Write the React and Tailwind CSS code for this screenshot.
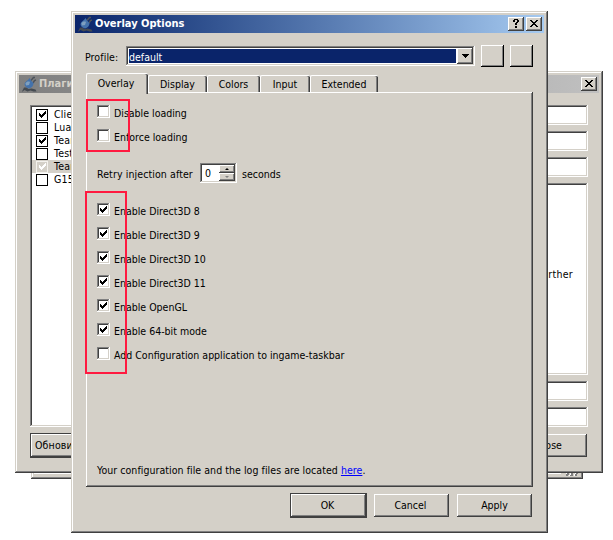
import clsx from 'clsx';

const RAISED =
  'bg-[#d4d0c8] shadow-[inset_-1px_-1px_#404040,inset_1px_1px_#fff,inset_-2px_-2px_#808080]';
const FRAME =
  'bg-[#d4d0c8] shadow-[inset_-1px_-1px_#404040,inset_1px_1px_#d4d0c8,inset_-2px_-2px_#808080,inset_2px_2px_#fff]';
const SUNKEN =
  'bg-white shadow-[inset_-1px_-1px_#fff,inset_1px_1px_#808080,inset_-2px_-2px_#d4d0c8,inset_2px_2px_#404040]';

const plugins = [
  { name: 'Client', checked: true },
  { name: 'Lua', checked: false },
  { name: 'Team', checked: true },
  { name: 'Test', checked: false },
  { name: 'Team', checked: true, disabled: true },
  { name: 'G15', checked: false },
];

const options = [
  { label: 'Enable Direct3D 8', checked: true },
  { label: 'Enable Direct3D 9', checked: true },
  { label: 'Enable Direct3D 10', checked: true },
  { label: 'Enable Direct3D 11', checked: true },
  { label: 'Enable OpenGL', checked: true },
  { label: 'Enable 64-bit mode', checked: true },
  { label: 'Add Configuration application to ingame-taskbar', checked: false },
];

function Tick() {
  return (
    <svg viewBox="0 0 7 7" className="h-[7px] w-[7px]" shapeRendering="crispEdges" fill="currentColor">
      <path d="M0 2h1v1h1v1h1v-1h1v-1h1v-1h1v-1h1v3h-1v1h-1v1h-1v1h-1v1h-1v-1h-1v-1h-1z" />
    </svg>
  );
}

function CloseGlyph() {
  return (
    <svg viewBox="0 0 8 7" className="h-[7px] w-2" shapeRendering="crispEdges">
      <path d="M0 0h2v1h1v1h2v-1h1v-1h2v1h-1v1h-1v1h-1v1h1v1h1v1h1v1h-2v-1h-1v-1h-2v1h-1v1h-2v-1h1v-1h1v-1h1v-1h-1v-1h-1v-1h-1z" />
    </svg>
  );
}

function HelpGlyph() {
  return (
    <svg viewBox="0 0 6 9" className="h-[9px] w-1.5" shapeRendering="crispEdges">
      <path d="M1 0h4v1h1v2h-1v1h-1v2h-2v-2h1v-1h1v-2h-2v2h-2v-2h1zM2 7h2v2h-2z" />
    </svg>
  );
}

function AppIcon() {
  return (
    <svg viewBox="0 0 16 16" className="h-4 w-4">
      <path d="M1 15.500l2-4h2.500l2 1.500 3-.5 4 1 1 2h-3l-3-1-3 1-3-1.500-2 1.500z" fill="#454b52" />
      <path d="M10 4.500l2.500-3h1.500M12 7l1.500-2.500 1.500-.5" stroke="#4d535a" strokeWidth="1.5" fill="none" />
      <path d="M8.500 2l1.500 2.500 2.500 2.500c0 3-2 5-4.500 5.500C5 12 3.500 10 3.500 8 4 5.500 7 4.500 8.500 2z" fill="#4472ab" />
      <path d="M4.500 7.500c1-2 3-2.500 4.500-1.500l-1 3-3 .5z" fill="#7fa0c0" />
    </svg>
  );
}

function CaptionButton({ children }) {
  return <button className={clsx('flex h-3.5 w-4 items-center justify-center pr-px pb-px', RAISED)}>{children}</button>;
}

function Checkbox({ checked }) {
  return (
    <span className={clsx('flex h-[13px] w-[13px] shrink-0 items-center justify-center', SUNKEN)}>
      {checked && <Tick />}
    </span>
  );
}

function CheckRow({ label, checked }) {
  return (
    <label className="flex h-6 items-start">
      <Checkbox checked={checked} />
      <span className="ml-1 pt-0.5 leading-[13px]">{label}</span>
    </label>
  );
}

function Tab({ label, width }) {
  return (
    <div
      className={clsx(
        'flex h-[17px] items-center justify-center rounded-t-[2px] border-t border-l border-white pt-0.5 pr-px shadow-[inset_-1px_0_#404040,inset_-2px_0_#808080]',
        width
      )}
    >
      {label}
    </div>
  );
}

function PluginsWindow() {
  return (
    <div className={clsx('absolute top-[71px] left-[15px] h-[402px] w-[588px] p-1', FRAME)}>
      <div className="flex h-[18px] items-center bg-linear-to-r from-[#808080] to-[#c0c0c0] pr-0.5 pl-0.5">
        <AppIcon />
        <span className="ml-0.5 text-[11px] font-bold text-[#d4d0c8]">Плагины</span>
        <span className="ml-auto">
          <CaptionButton>
            <CloseGlyph />
          </CaptionButton>
        </span>
      </div>
      <div className="mt-3 flex justify-between pr-[11px] pl-[11px]">
        <div>
          <div className={clsx('h-[322px] w-[200px] p-0.5 pt-[3px]', SUNKEN)}>
            {plugins.map((p, i) => (
              <div key={i} className={clsx('flex h-[13px] items-center pl-1', p.disabled && 'bg-[#d4d0c8]')}>
                <span
                  className={clsx(
                    'flex h-3 w-3 items-center justify-center border',
                    p.disabled ? 'border-[#f4f2ee] text-white' : 'border-black bg-white'
                  )}
                >
                  {p.checked && <Tick />}
                </span>
                <span className="ml-1.5 leading-[13px] tracking-[0.2px] whitespace-nowrap">{p.name}</span>
              </div>
            ))}
          </div>
          <button className={clsx('mt-1.5 h-[25px] w-[100px] border border-[#404040] pl-1 text-left tracking-[0.15px]', RAISED)}>
            Обновить
          </button>
        </div>
        <div className="flex w-[300px] flex-col gap-1.5">
          <div className={clsx('h-5', SUNKEN)} />
          <div className={clsx('h-5', SUNKEN)} />
          <div className={clsx('h-5', SUNKEN)} />
          <div className={clsx('flex h-48 items-center justify-end pr-[15px] pb-2 tracking-[0.3px]', SUNKEN)}>further</div>
          <div className={clsx('h-5', SUNKEN)} />
          <div className={clsx('h-5', SUNKEN)} />
          <button className={clsx('mt-px mr-px h-[23px] w-[76px] self-end', RAISED)}>Close</button>
        </div>
      </div>
    </div>
  );
}

function OverlayPane() {
  return (
    <div className="h-[395px] bg-[#d4d0c8] pt-[13px] pl-[11px] shadow-[inset_-1px_-1px_#404040,inset_1px_1px_#fff,inset_-2px_-2px_#808080]">
      <CheckRow label="Disable loading" />
      <CheckRow label="Enforce loading" />
      <div className="mt-2.5 flex h-5 items-center">
        <span className="w-[103px] pt-[3px] tracking-[0.1px]">Retry injection after</span>
        <div className={clsx('flex h-5 w-[37px] p-0.5', SUNKEN)}>
          <span className="grow pl-[3px] leading-[17px]">0</span>
          <div className="flex w-4 flex-col">
            <span className={clsx('flex h-2 items-center justify-center', RAISED)}>
              <i className="border-x-2 border-b-2 border-x-transparent border-b-black" />
            </span>
            <span className={clsx('flex h-2 items-center justify-center', RAISED)}>
              <i className="border-x-2 border-t-2 border-x-transparent border-t-[#808080]" />
            </span>
          </div>
        </div>
        <span className="ml-[5px] pt-[3px]">seconds</span>
      </div>
      <div className="mt-5">
        {options.map((o) => (
          <CheckRow key={o.label} {...o} />
        ))}
      </div>
      <p className="mt-[92px] leading-[15px] tracking-[0.05px]">
        Your configuration file and the log files are located{' '}
        <a href="#" className="text-[#0000ff] underline">
          here
        </a>
        .
      </p>
    </div>
  );
}

function OptionsWindow() {
  return (
    <div className={clsx('absolute top-[11px] left-[71px] h-[522px] w-[477px] p-1', FRAME)}>
      <div className="flex h-[18px] items-center bg-linear-to-r from-[#0a246a] to-[#a6caf0] pr-0.5 pl-0.5">
        <AppIcon />
        <span className="ml-0.5 text-[11px] font-bold text-white">Overlay Options</span>
        <div className="ml-auto flex gap-0.5">
          <CaptionButton>
            <HelpGlyph />
          </CaptionButton>
          <CaptionButton>
            <CloseGlyph />
          </CaptionButton>
        </div>
      </div>
      <div className="mt-3 flex h-[22px] items-center pl-2.5">
        <span className="w-[41px] pt-[3px] tracking-[0.1px]">Profile:</span>
        <div className={clsx('flex h-5 w-[349px] p-0.5', SUNKEN)}>
          <div className="m-px h-3.5 grow bg-[#0a246a] leading-4 text-white">default</div>
          <div className={clsx('flex h-4 w-4 items-center justify-center', RAISED)}>
            <svg viewBox="0 0 7 4" className="h-1 w-[7px]" shapeRendering="crispEdges">
              <path d="M0 0h7v1h-1v1h-1v1h-1v1h-1v-1h-1v-1h-1v-1h-1z" />
            </svg>
          </div>
        </div>
        <button className="ml-1.5 h-[22px] w-[23px] shadow-[inset_-1px_-1px_#000,inset_1px_1px_#fff,inset_-2px_-2px_#808080]" />
        <button className="ml-1.5 h-[22px] w-[23px] shadow-[inset_-1px_-1px_#000,inset_1px_1px_#fff,inset_-2px_-2px_#808080]" />
      </div>
      <div className="mt-1.5 ml-[11px] w-[447px]">
        <div className="flex h-[19px] items-end">
          <div className="z-10 -mb-0.5 flex h-[21px] w-[62px] shrink-0 items-center justify-center rounded-t-[2px] border-t border-l border-white bg-[#d4d0c8] pr-[3px] shadow-[inset_-1px_0_#404040,inset_-2px_0_#808080]">
            Overlay
          </div>
          <Tab label="Display" width="w-[59px]" />
          <Tab label="Colors" width="w-[53px]" />
          <Tab label="Input" width="w-[50px]" />
          <Tab label="Extended" width="w-[68px]" />
        </div>
        <OverlayPane />
      </div>
      <div className="mt-1.5 flex items-center justify-end pr-3">
        <button className={clsx('mr-[7px] h-[25px] w-[77px] border border-[#404040] pr-0.5', RAISED)}>OK</button>
        <button className={clsx('mr-2 h-[23px] w-[75px] pr-0.5', RAISED)}>Cancel</button>
        <button className={clsx('h-[23px] w-[75px]', RAISED)}>Apply</button>
      </div>
    </div>
  );
}

export default function App() {
  return (
    <div className="relative h-[540px] w-[613px] overflow-hidden bg-white font-['DejaVu_Sans_Condensed','DejaVu_Sans',sans-serif] text-[10.5px] text-black">
      <div className={clsx('absolute top-[440px] left-[31px] flex h-[39px] w-[552px] items-end justify-end px-[3px] pb-[5px]', FRAME)}>
        <div className="h-px grow bg-white" />
        <div className="mr-0.5 -mb-0.5 ml-[5px] h-[3px] w-3 bg-[repeating-linear-gradient(115deg,#fff_0_1px,#808080_1px_3px,#d4d0c8_3px_4px)]" />
      </div>
      <PluginsWindow />
      <OptionsWindow />
      <div className="absolute top-[99px] left-[86px] h-[53px] w-11 border-2 border-[#ff1a40]" />
      <div className="absolute top-[191px] left-[85px] h-[183px] w-[42px] border-2 border-[#ff1a40]" />
    </div>
  );
}
